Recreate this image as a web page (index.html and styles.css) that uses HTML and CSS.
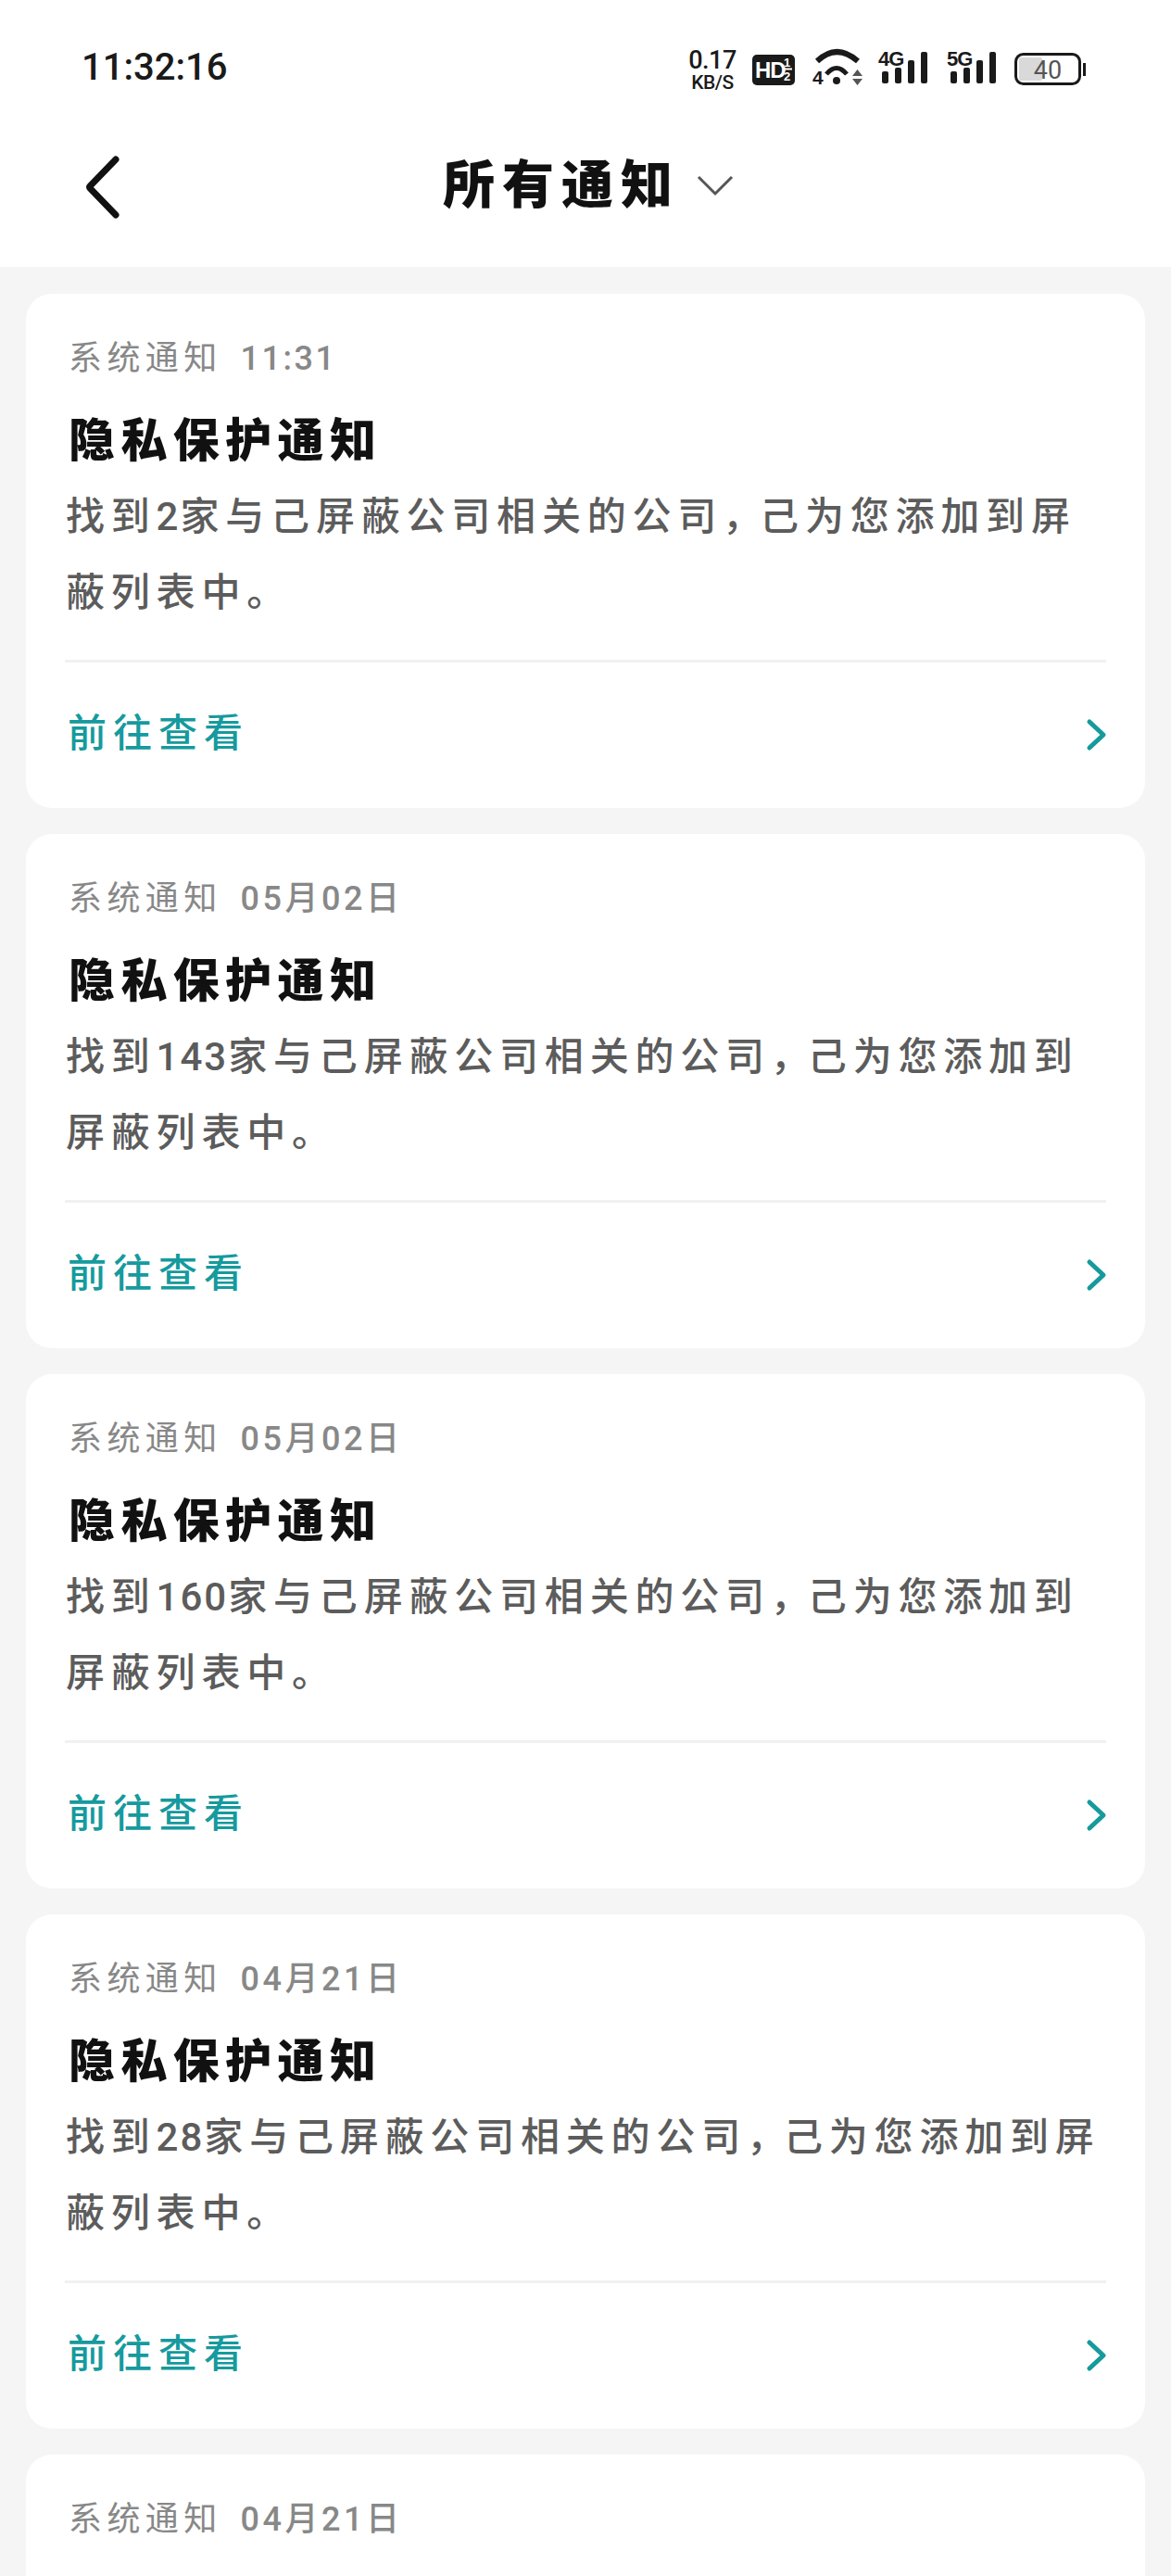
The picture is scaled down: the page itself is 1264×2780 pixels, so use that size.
FILE: index.html
```html
<!DOCTYPE html>
<html lang="zh-CN">
<head>
    <meta charset="UTF-8">
    <meta name="viewport" content="width=device-width, initial-scale=1.0">
    <title>所有通知</title>
    <link rel="stylesheet" href="styles.css">
</head>
<body>
    <div class="status-bar">
        <span class="clock">11:32:16</span>
        <div class="status-icons">
            <div class="net-speed"><span class="net-num">0.17</span><span class="net-unit">KB/S</span></div>
            <svg class="icon-hd" width="46" height="33" viewBox="0 0 46 33">
                <rect width="46" height="33" rx="5" fill="#1a1a1a"/>
                <text x="3" y="25" class="hd-text">HD</text>
                <text x="34" y="13" class="hd-small">1</text>
                <rect x="33" y="14.500" width="10" height="2" fill="#fff"/>
                <text x="34" y="28" class="hd-small">2</text>
            </svg>
            <svg class="icon-wifi" width="54" height="41" viewBox="0 0 54 41">
                <path d="M5 14 Q26 -6 49 14" fill="none" stroke="#1a1a1a" stroke-width="6"/>
                <path d="M15 28 Q26 15 37 28" fill="none" stroke="#1a1a1a" stroke-width="5"/>
                <circle cx="26" cy="35" r="4" fill="#1a1a1a"/>
                <text x="0" y="39" class="wifi-text">4</text>
                <path d="M43 30 L48.500 23 L54 30 Z" fill="#555"/>
                <path d="M43 33 L54 33 L48.500 40 Z" fill="#555"/>
            </svg>
            <svg class="icon-signal" width="55" height="38" viewBox="0 0 55 38">
                <text x="1" y="18" class="signal-text">4G</text>
                <rect x="5" y="24" width="7" height="13" rx="2" fill="#1a1a1a"/>
                <rect x="19" y="20" width="7" height="17" rx="2" fill="#1a1a1a"/>
                <rect x="33" y="12" width="7" height="25" rx="2" fill="#1a1a1a"/>
                <rect x="47" y="3" width="7" height="34" rx="2" fill="#1a1a1a"/>
            </svg>
            <svg class="icon-signal" width="55" height="38" viewBox="0 0 55 38">
                <text x="1" y="18" class="signal-text">5G</text>
                <rect x="5" y="24" width="7" height="13" rx="2" fill="#1a1a1a"/>
                <rect x="19" y="20" width="7" height="17" rx="2" fill="#1a1a1a"/>
                <rect x="33" y="12" width="7" height="25" rx="2" fill="#1a1a1a"/>
                <rect x="47" y="3" width="7" height="34" rx="2" fill="#1a1a1a"/>
            </svg>
            <svg class="icon-battery" width="77" height="35" viewBox="0 0 77 35">
                <rect x="1.500" y="1.500" width="69" height="32" rx="8" fill="#fff" stroke="#1a1a1a" stroke-width="3"/>
                <rect x="5" y="5" width="25" height="25" rx="2" fill="#d9d9d9"/>
                <rect x="74" y="11" width="3" height="14" fill="#1a1a1a"/>
                <text x="36" y="28" text-anchor="middle" class="battery-text">40</text>
            </svg>
        </div>
    </div>

    <header class="top-bar">
        <svg class="back-icon" width="38" height="68" viewBox="0 0 38 68">
            <path d="M33 4 L5 33 Q4 34 5 35 L33 64" fill="none" stroke="#111" stroke-width="7" stroke-linecap="round"/>
        </svg>
        <div class="page-title">
            <h1>所有通知</h1>
            <svg width="40" height="22" viewBox="0 0 40 22">
                <path d="M2 2 L20 20 L38 2" fill="none" stroke="#555" stroke-width="3"/>
            </svg>
        </div>
    </header>

    <main class="list">
        <section class="card">
            <div class="meta"><span class="source">系统通知</span><span class="date time">11:31</span></div>
            <h2 class="card-title">隐私保护通知</h2>
            <p class="card-text">找到<span class="num">2</span>家与己屏蔽公司相关的公司<span class="comma">&#65292;</span>己为您添加到屏蔽列表中。</p>
            <div class="card-link">
                <span>前往查看</span>
                <svg width="24" height="36" viewBox="0 0 24 36"><path d="M4 4 L19 18 L4 32" fill="none" stroke="#169a9c" stroke-width="5" stroke-linecap="round" stroke-linejoin="round"/></svg>
            </div>
        </section>
        <section class="card">
            <div class="meta"><span class="source">系统通知</span><span class="date">05月02日</span></div>
            <h2 class="card-title">隐私保护通知</h2>
            <p class="card-text">找到<span class="num">143</span>家与己屏蔽公司相关的公司<span class="comma">&#65292;</span>己为您添加到屏蔽列表中。</p>
            <div class="card-link">
                <span>前往查看</span>
                <svg width="24" height="36" viewBox="0 0 24 36"><path d="M4 4 L19 18 L4 32" fill="none" stroke="#169a9c" stroke-width="5" stroke-linecap="round" stroke-linejoin="round"/></svg>
            </div>
        </section>
        <section class="card">
            <div class="meta"><span class="source">系统通知</span><span class="date">05月02日</span></div>
            <h2 class="card-title">隐私保护通知</h2>
            <p class="card-text">找到<span class="num">160</span>家与己屏蔽公司相关的公司<span class="comma">&#65292;</span>己为您添加到屏蔽列表中。</p>
            <div class="card-link">
                <span>前往查看</span>
                <svg width="24" height="36" viewBox="0 0 24 36"><path d="M4 4 L19 18 L4 32" fill="none" stroke="#169a9c" stroke-width="5" stroke-linecap="round" stroke-linejoin="round"/></svg>
            </div>
        </section>
        <section class="card">
            <div class="meta"><span class="source">系统通知</span><span class="date">04月21日</span></div>
            <h2 class="card-title">隐私保护通知</h2>
            <p class="card-text">找到<span class="num">28</span>家与己屏蔽公司相关的公司<span class="comma">&#65292;</span>己为您添加到屏蔽列表中。</p>
            <div class="card-link">
                <span>前往查看</span>
                <svg width="24" height="36" viewBox="0 0 24 36"><path d="M4 4 L19 18 L4 32" fill="none" stroke="#169a9c" stroke-width="5" stroke-linecap="round" stroke-linejoin="round"/></svg>
            </div>
        </section>
        <section class="card">
            <div class="meta"><span class="source">系统通知</span><span class="date">04月21日</span></div>
        </section>
    </main>
</body>
</html>
```

FILE: styles.css
```css
html, body {
    margin: 0;
    height: 2780px;
    overflow: hidden;
}

body {
    font-family: Roboto, "Noto Sans CJK SC", sans-serif;
    background-color: #f5f5f5;
}

svg {
    overflow: visible;
}

.status-bar {
    height: 144px;
    box-sizing: border-box;
    background-color: #fff;
    padding: 52px 0 0 88px;
    display: flex;
    align-items: flex-start;
    justify-content: space-between;
}

.clock {
    font-size: 40px;
    line-height: 42px;
    font-weight: 500;
    color: #1a1a1a;
}

.status-icons {
    display: flex;
    align-items: flex-start;
    margin-right: 92px;
}

.net-speed {
    display: flex;
    flex-direction: column;
    align-items: center;
    width: 50px;
    color: #1a1a1a;
    margin-right: 18px;
}

.net-num {
    font-size: 27px;
    line-height: 27px;
    font-weight: 500;
    letter-spacing: -0.500px;
}

.net-unit {
    font-size: 21px;
    line-height: 21px;
    font-weight: 500;
    letter-spacing: -0.500px;
}

.icon-hd {
    margin: 7px 19px 0 0;
}

.hd-text {
    font: bold 24px "Liberation Sans", sans-serif;
    letter-spacing: -1px;
    fill: #fff;
}

.hd-small {
    font: bold 13px "Liberation Sans", sans-serif;
    fill: #fff;
}

.icon-wifi {
    margin-right: 16px;
}

.wifi-text {
    font: bold 21px "Liberation Sans", sans-serif;
    fill: #1a1a1a;
}

.icon-signal {
    margin: 1px 19px 0 0;
}

.signal-text {
    font: bold 22px "Liberation Sans", sans-serif;
    letter-spacing: -1px;
    fill: #1a1a1a;
}

.icon-battery {
    margin-top: 5px;
}

.battery-text {
    font: 27px Roboto, sans-serif;
    fill: #555;
}

.top-bar {
    height: 144px;
    box-sizing: border-box;
    padding-bottom: 32px;
    background-color: #fff;
    position: relative;
    display: flex;
    align-items: center;
    justify-content: center;
}

.back-icon {
    position: absolute;
    left: 92px;
    top: 24px;
}

.page-title {
    display: flex;
    align-items: center;
    gap: 18px;
    margin-left: 6px;
}

.page-title h1 {
    margin: 0;
    font-size: 56px;
    line-height: 70px;
    font-weight: 900;
    letter-spacing: 8px;
    color: #111;
}

.list {
    padding: 29px 28px 0;
    display: flex;
    flex-direction: column;
    gap: 28px;
}

.card {
    background-color: #fff;
    border-radius: 28px;
    height: 555px;
    flex-shrink: 0;
    box-sizing: border-box;
    padding: 45px 42px 0;
}

.meta {
    display: flex;
    gap: 20px;
    padding-left: 4px;
    height: 50px;
    line-height: 50px;
    color: #888;
    font-size: 36px;
    letter-spacing: 5.400px;
}

.date {
    font-weight: 500;
    letter-spacing: 3.500px;
}

.time {
    letter-spacing: 2.500px;
}

.card-title {
    margin: 29px 0 0;
    padding-left: 4px;
    font-size: 50px;
    line-height: 70px;
    font-weight: 900;
    letter-spacing: 6.400px;
    color: #111;
}

.card-text {
    margin: 6px 0 0;
    padding: 0 0 31px 1px;
    font-size: 42px;
    line-height: 82px;
    font-weight: 500;
    letter-spacing: 6.800px;
    color: #5c5c5c;
    border-bottom: 3px solid #f0f2f2;
    height: 164px;
}

.num {
    letter-spacing: 2px;
}

.comma {
    letter-spacing: -2px;
}

.card-link {
    height: 154px;
    padding-left: 3px;
    display: flex;
    align-items: center;
    justify-content: space-between;
    color: #159a9e;
    font-size: 42px;
    font-weight: 500;
    letter-spacing: 7px;
}

.card-link span {
    margin-top: -10px;
}

.card-link svg {
    margin: 2px -2px 0 0;
}
```
